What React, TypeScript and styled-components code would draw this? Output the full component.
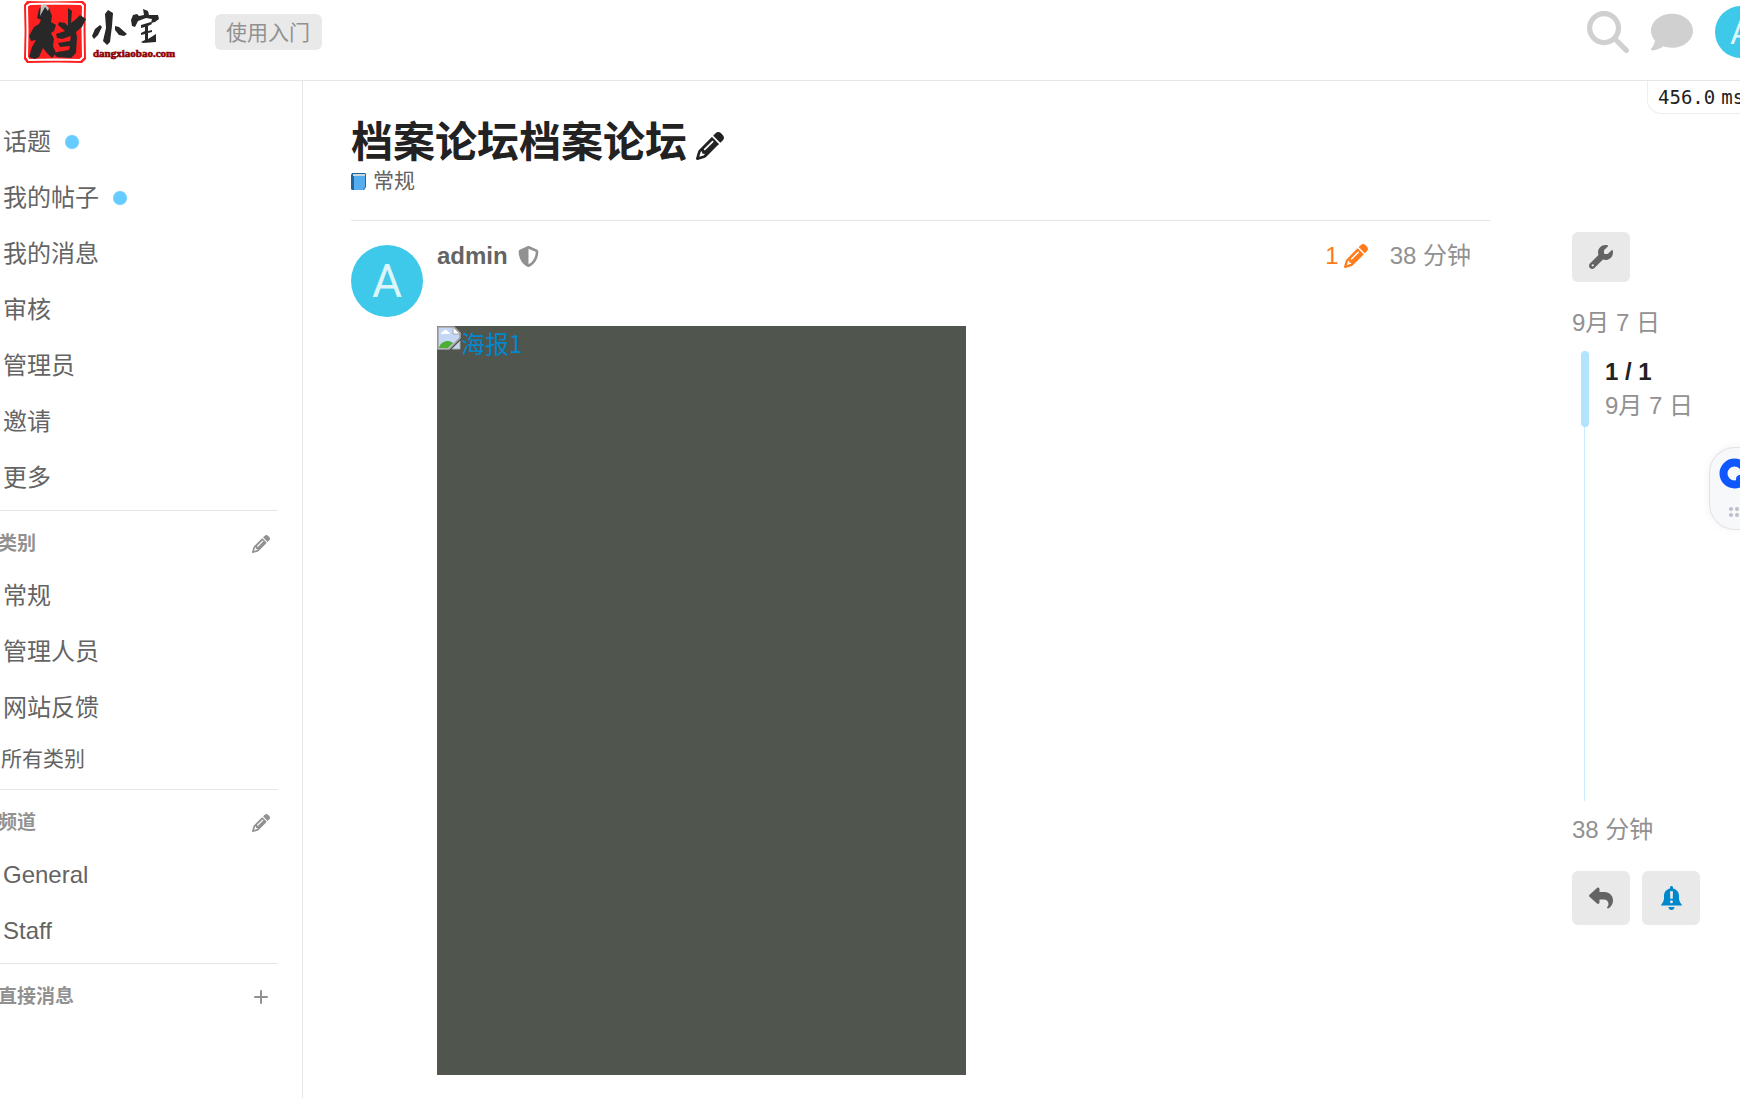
import React from "react";
import styled, { createGlobalStyle } from "styled-components";
import {
  FaComment,
  FaMagnifyingGlass,
  FaPencil,
  FaReply,
  FaShieldHalved,
  FaWrench,
} from "react-icons/fa6";

const GlobalStyle = createGlobalStyle`
  * { box-sizing: border-box; }
  html, body { margin: 0; }
  body {
    background: #fff;
    color: #646464;
    font-family: "Liberation Sans", "Noto Sans CJK SC", sans-serif;
    font-size: 24px;
    line-height: 34px;
    overflow-x: hidden;
  }
  button { font: inherit; border: 0; padding: 0; cursor: pointer; }
  a { color: inherit; text-decoration: none; }
`;

const Page = styled.div`
  min-height: 100vh;
  display: flex;
  flex-direction: column;
`;

const Header = styled.header`
  display: flex;
  align-items: flex-start;
  height: 81px;
  padding-left: 24px;
  border-bottom: 1px solid #e6e6e6;
  overflow: hidden;
`;

const LogoLink = styled.a`
  display: block;
  width: 152px;
  height: 64px;
`;

const StartButton = styled.button`
  margin: 14px 0 0 39px;
  height: 36px;
  padding: 2px 12px 0 11px;
  border-radius: 6px;
  background: #e9e9e9;
  color: #919191;
  font-size: 21px;
`;

const HeaderTools = styled.nav`
  display: flex;
  align-items: center;
  gap: 22px;
  height: 64px;
  margin: 0 -27px 0 auto;
`;

const ToolButton = styled.button`
  display: flex;
  background: none;
  color: #d0d0d0;
  font-size: 42px;
`;

const Avatar = styled.span<{ $size: number; $font: number }>`
  display: flex;
  flex: none;
  align-items: center;
  justify-content: center;
  width: ${(p) => p.$size}px;
  height: ${(p) => p.$size}px;
  border-radius: 50%;
  background: #3ec8ea;
  color: #dcf5fb;
  font-family: Roboto, sans-serif;
  font-size: ${(p) => p.$font}px;
`;

const Body = styled.div`
  display: flex;
  flex: 1;
`;

const Sidebar = styled.aside`
  flex: none;
  width: 303px;
  padding: 33px 24px 0 0;
  border-right: 1px solid #e6e6e6;
`;

const Section = styled.section`
  padding-bottom: 4px;
  & + & { border-top: 1px solid #e6e6e6; }
`;

const SectionHead = styled.div`
  display: flex;
  align-items: center;
  justify-content: space-between;
  height: 57px;
  padding: 9px 8px 0 0;
  margin-left: -2px;
  color: #919191;
  h2 { margin: 0; font-size: 19px; font-weight: 700; }
`;

const IconButton = styled.button<{ $size: number; $drop?: boolean }>`
  display: flex;
  padding-top: ${(p) => (p.$drop ? 6 : 0)}px;
  background: none;
  color: inherit;
  font-size: ${(p) => p.$size}px;
`;

const List = styled.ul`
  margin: 0;
  padding: 0;
  list-style: none;
`;

const SideLink = styled.a<{ $small?: boolean }>`
  display: flex;
  align-items: center;
  gap: 14px;
  height: ${(p) => (p.$small ? 46 : 56)}px;
  margin-bottom: ${(p) => (p.$small ? 7 : 0)}px;
  padding-left: ${(p) => (p.$small ? 1 : 3)}px;
  font-size: ${(p) => (p.$small ? 21 : 24)}px;
  ${(p) => p.$small && "margin-bottom: 3px;"}
`;

const Dot = styled.span`
  width: 14px;
  height: 14px;
  border-radius: 50%;
  background: #66ccff;
`;

const Main = styled.main`
  display: flex;
  flex: 1;
  gap: 82px;
  min-width: 0;
  padding: 34px 0 0 48px;
`;

const Topic = styled.div`
  flex: 1;
  min-width: 0;
`;

const TitleRow = styled.div`
  display: flex;
  align-items: center;
  gap: 9px;
  height: 56px;
  color: #222;
  h1 { margin: 0; font-size: 42px; line-height: 56px; font-weight: 700; }
`;

const Category = styled.a`
  display: flex;
  align-items: center;
  gap: 7px;
  height: 20px;
  font-size: 21px;
`;

const Post = styled.article`
  display: flex;
  align-items: flex-start;
  gap: 14px;
  margin-top: 29px;
  padding-top: 24px;
  border-top: 1px solid #e6e6e6;
`;

const PostBody = styled.div`
  flex: 1;
  min-width: 0;
`;

const PostMeta = styled.div`
  display: flex;
  align-items: center;
  height: 22px;
  padding-right: 19px;
  color: #919191;
  svg { display: block; }
`;

const Author = styled.a`
  margin-right: 10px;
  color: #646464;
  font-weight: 700;
`;

const Edits = styled.button`
  display: flex;
  align-items: center;
  gap: 5px;
  margin: 0 22px 0 auto;
  background: none;
  color: #ff7a18;
`;

const Poster = styled.a`
  display: flex;
  align-items: flex-start;
  width: 529px;
  max-width: 100%;
  height: 749px;
  margin-top: 59px;
  background: #50554d;
  color: #0088cc;
  font-family: "Noto Sans CJK SC", sans-serif;
`;

const Timeline = styled.aside`
  flex: none;
  width: 168px;
  padding-top: 117px;
  color: #919191;
`;

const SquareButton = styled.button<{ $tall?: boolean; $blue?: boolean }>`
  display: flex;
  align-items: center;
  justify-content: center;
  width: 58px;
  height: ${(p) => (p.$tall ? 54 : 50)}px;
  border-radius: 6px;
  background: #e9e9e9;
  color: ${(p) => (p.$blue ? "#0088cc" : "#646464")};
  font-size: 24px;
`;

const DateLink = styled.a<{ $last?: boolean }>`
  display: block;
  margin: ${(p) => (p.$last ? "12px 0 24px" : "24px 0 11px")};
`;

const Track = styled.div`
  height: 450px;
  margin-left: 12px;
  border-left: 1px solid #c8ecff;
`;

const Position = styled.div`
  display: flex;
  gap: 16px;
  margin-left: -4px;
`;

const Handle = styled.span`
  width: 8px;
  height: 76px;
  border-radius: 4px;
  background: #b0e4ff;
`;

const Count = styled.div`
  padding-top: 4px;
  strong { display: block; color: #222; }
`;

const ButtonRow = styled.div`
  display: flex;
  gap: 12px;
`;

const Timing = styled.div`
  position: absolute;
  top: 81px;
  right: 0;
  width: 93px;
  height: 33px;
  padding-left: 10px;
  border: 1px solid #eee;
  border-width: 0 0 1px 1px;
  border-radius: 0 0 0 14px;
  overflow: hidden;
  white-space: nowrap;
  color: #222;
  font: 19px/32px "DejaVu Sans Mono", monospace;
  span { margin-left: 6px; }
`;

const Floating = styled.div`
  position: fixed;
  top: 447px;
  right: 0;
  width: 31px;
  height: 83px;
  padding: 10px 0 0 9px;
  border: 1px solid #e2e3e6;
  border-right: 0;
  border-radius: 26px 0 0 26px;
  background: #f7f8fa;
  box-shadow: 0 0 8px rgba(0, 0, 0, 0.06);
  overflow: hidden;
`;

const Logo = () => (
  <svg width="152" height="64" viewBox="0 0 152 64" role="img" aria-label="档小宝">
    <path d="M3 1l20 .5L59 1l3 3-.5 25 .5 30-4 4-25-.6L3 63l-3-4 .6-28L0 5z" fill="#ff1f1f" />
    <path d="M6 4l26-.5L57 4l2 2-.5 24 .5 27-3 3-24-.5L5 60l-2-3 .5-26L3 6z" fill="none" stroke="#fff" strokeWidth="2" />
    <g fill="#282828">
      <path d="M20 4l5 4 3 8-1 6 5 3-2 6-3 2 3 6-1 7 3 7-4 5-6-6-3-4-4 9-4 2-6-2 3-10 4-7-5 1-2-5 5-9 5-3 2-4-4-2 2-9z" />
      <path d="M44 8l4 3-1 12 4-3 5-5 6 4-4 8-6 5 1 5-1 16-5 5-14-1-3-3 3-2 12-2 1-4-10 1-2-4 12-2 1-5-9 3-5-1-1-4 9-3-7-6 1-3 6 1 3 3z" />
      <path d="M17 5l3-2 5 5-1 3-3-4-5 9z" fill="#fff" opacity=".7" />
      <path d="M84 10l5 3-1 13-2 16-3 3-4-4 3-13-1-14zM76 25l2 2-4 8-4 4-2-3 3-7zM91 26l4 1 8 7-3 2-5-1-4-5z" />
      <path d="M119 9l5 2 1 4 9 0 1 4-4 3-4 1 1-4-6-1-8 3-3 6-3-1-1-6 2-5 4-1 2 2 5-1z" />
      <path d="M117 25l10-3 1 2-4 2v5l4-1v2l-4 1v6l8-5v8l-13 1-2-1 4-2v-6l-4 1 0-2 4-2v-4l-4 1z" />
    </g>
    <text x="69" y="57" fill="#8e0000" stroke="#8e0000" strokeWidth=".6" fontFamily="Liberation Serif, serif" fontWeight="700" fontSize="11">dangxiaobao.com</text>
  </svg>
);

const Book = () => (
  <svg width="15" height="17" viewBox="0 0 15 17" aria-hidden="true">
    <path d="M1 0h13l1 1v13l-2 3H1l-1-1V2z" fill="#226699" />
    <path d="M2 1h12v2H2z" fill="#ccd6dd" />
    <path d="M3 3h11v11l-2 3H3z" fill="#55acee" />
  </svg>
);

const BrokenImage = () => (
  <svg width="24" height="24" viewBox="0 0 24 24" aria-hidden="true">
    <path d="M1 1h16l6 6v5L12 23H1z" fill="#c4d7f5" stroke="#a6a6a6" strokeWidth="1.6" />
    <path d="M16 1l7 7h-7z" fill="#fff" stroke="#a6a6a6" />
    <path d="M4 8c0-2 2-2 2-2 1-3 5-2 5 0 2 0 2 2 1 2z" fill="#fff" />
    <path d="M2 22c1-5 5-7 9-7 2 0 4 1 5 2l-5 5z" fill="#4caf32" />
    <path d="M23 15v8h-8z" fill="#c4d7f5" stroke="#a6a6a6" />
  </svg>
);

const BellAlert = () => (
  <svg width="21" height="24" viewBox="0 0 448 512" fill="currentColor" aria-hidden="true">
    <path fillRule="evenodd" d="M224 0c-18 0-32 14-32 32v20C119 67 64 131 64 208v48c0 42-14 83-40 115l-17 21c-17 21-2 24 17 24h400c19 0 34-3 17-24l-17-21c-26-32-40-73-40-115v-48c0-77-55-141-128-156V32c0-18-14-32-32-32zm-32 112h64l-6 160h-52zm32 190a32 32 0 1 1 0 64 32 32 0 0 1 0-64z" />
    <path d="M160 448h128c0 36-29 64-64 64s-64-28-64-64z" />
  </svg>
);

const Plus = () => (
  <svg width="18" height="18" viewBox="0 0 18 18" aria-hidden="true">
    <path d="M9 3v12M3 9h12" stroke="currentColor" strokeWidth="2" strokeLinecap="round" />
  </svg>
);

const Assistant = () => (
  <svg width="46" height="64" viewBox="0 0 46 64" aria-hidden="true">
    <circle cx="15.500" cy="15.500" r="11" fill="none" stroke="#0f57ff" strokeWidth="8" />
    <path d="M17 24v-3q0-3 3-4h4v7z" fill="#0f57ff" />
    <g fill="#bfbfcc">
      <circle cx="12" cy="51" r="2" /><circle cx="18" cy="51" r="2" />
      <circle cx="12" cy="57" r="2" /><circle cx="18" cy="57" r="2" />
    </g>
  </svg>
);

type Item = { label: string; fresh?: boolean; small?: boolean };

const links: Item[] = [
  { label: "话题", fresh: true },
  { label: "我的帖子", fresh: true },
  { label: "我的消息" },
  { label: "审核" },
  { label: "管理员" },
  { label: "邀请" },
  { label: "更多" },
];

const categories: Item[] = [
  { label: "常规" },
  { label: "管理人员" },
  { label: "网站反馈" },
  { label: "所有类别", small: true },
];

const channels: Item[] = [{ label: "General" }, { label: "Staff" }];

const SideList = ({ items }: { items: Item[] }) => (
  <List>
    {items.map((item) => (
      <li key={item.label}>
        <SideLink href="#" $small={item.small}>
          {item.label}
          {item.fresh && <Dot />}
        </SideLink>
      </li>
    ))}
  </List>
);

export default function App() {
  return (
    <Page>
      <GlobalStyle />
      <Header>
        <LogoLink href="#"><Logo /></LogoLink>
        <StartButton>使用入门</StartButton>
        <HeaderTools>
          <ToolButton aria-label="搜索"><FaMagnifyingGlass /></ToolButton>
          <ToolButton aria-label="聊天"><FaComment /></ToolButton>
          <Avatar $size={52} $font={34}>A</Avatar>
        </HeaderTools>
      </Header>
      <Body>
        <Sidebar>
          <Section><SideList items={links} /></Section>
          <Section>
            <SectionHead>
              <h2>类别</h2>
              <IconButton $size={18} aria-label="编辑类别"><FaPencil /></IconButton>
            </SectionHead>
            <SideList items={categories} />
          </Section>
          <Section>
            <SectionHead>
              <h2>频道</h2>
              <IconButton $size={18} aria-label="编辑频道"><FaPencil /></IconButton>
            </SectionHead>
            <SideList items={channels} />
          </Section>
          <Section>
            <SectionHead>
              <h2>直接消息</h2>
              <IconButton $size={18} aria-label="新消息"><Plus /></IconButton>
            </SectionHead>
          </Section>
        </Sidebar>
        <Main>
          <Topic>
            <TitleRow>
              <h1>档案论坛档案论坛</h1>
              <IconButton $size={28} $drop aria-label="编辑标题"><FaPencil /></IconButton>
            </TitleRow>
            <Category href="#"><Book />常规</Category>
            <Post>
              <Avatar $size={72} $font={46}>A</Avatar>
              <PostBody>
                <PostMeta>
                  <Author href="#">admin</Author>
                  <FaShieldHalved size={21} />
                  <Edits>1<FaPencil /></Edits>
                  <a href="#">38 分钟</a>
                </PostMeta>
                <Poster href="#"><BrokenImage />海报1</Poster>
              </PostBody>
            </Post>
          </Topic>
          <Timeline>
            <SquareButton aria-label="管理"><FaWrench /></SquareButton>
            <DateLink href="#">9月 7 日</DateLink>
            <Track>
              <Position>
                <Handle />
                <Count><strong>1 / 1</strong>9月 7 日</Count>
              </Position>
            </Track>
            <DateLink href="#" $last>38 分钟</DateLink>
            <ButtonRow>
              <SquareButton $tall aria-label="回复"><FaReply /></SquareButton>
              <SquareButton $tall $blue aria-label="通知"><BellAlert /></SquareButton>
            </ButtonRow>
          </Timeline>
        </Main>
      </Body>
      <Timing>456.0<span>ms</span></Timing>
      <Floating><Assistant /></Floating>
    </Page>
  );
}
